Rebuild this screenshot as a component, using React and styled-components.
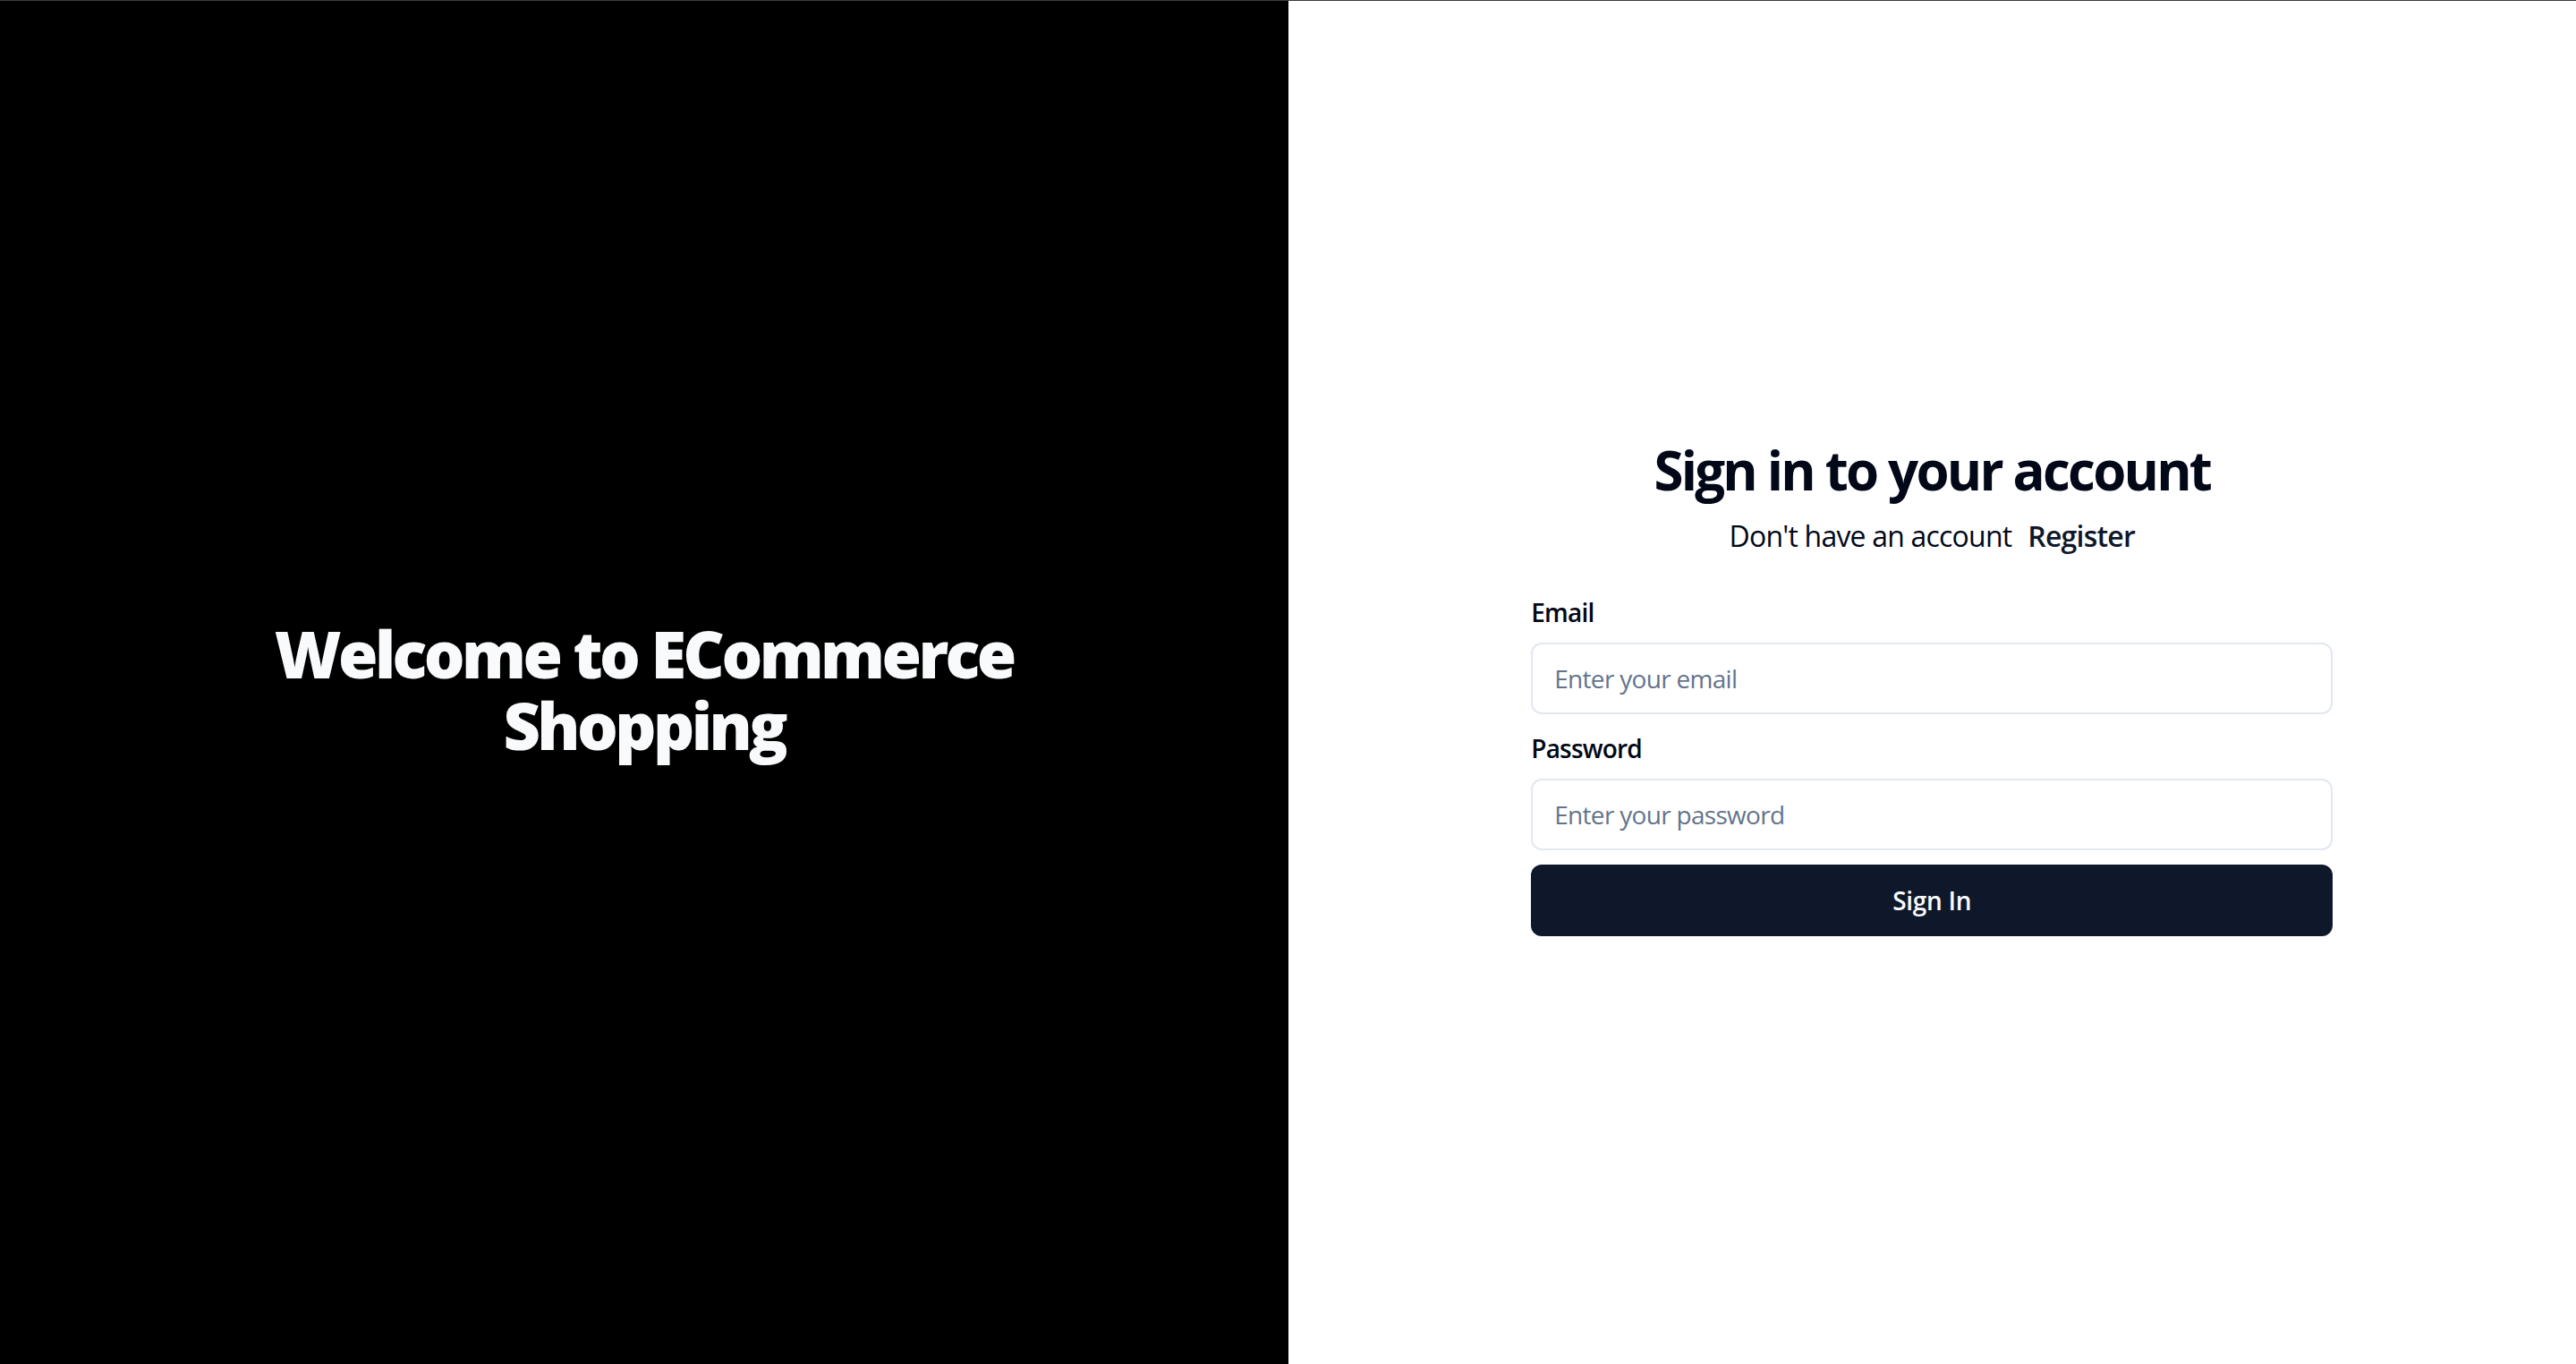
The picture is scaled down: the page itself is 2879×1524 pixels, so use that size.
import React from 'react';
import styled, { createGlobalStyle } from 'styled-components';

const GlobalStyle = createGlobalStyle`
  * { box-sizing: border-box; }
  html, body { margin: 0; padding: 0; }
  body {
    font-family: "Open Sans", "Noto Sans", sans-serif;
    background: #ffffff;
    color: #020817;
  }
`;

const Page = styled.div`
  display: grid;
  grid-template-columns: 1fr 1fr;
  height: 100vh;
  border-top: 1px solid #3b3b3b;
`;

const Hero = styled.section`
  background: #000000;
  display: flex;
  align-items: center;
  justify-content: center;
  padding: 14px 64px 0;
`;

const HeroTitle = styled.h1`
  margin: 0;
  max-width: 900px;
  font-size: 72px;
  line-height: 80px;
  font-weight: 800;
  letter-spacing: -3.6px;
  text-align: center;
  color: #f8fafc;
`;

const Side = styled.section`
  display: flex;
  align-items: center;
  justify-content: center;
  padding-top: 10px;
`;

const Card = styled.div`
  width: 896px;
  display: flex;
  flex-direction: column;
`;

const Title = styled.h2`
  margin: 0;
  font-size: 60px;
  line-height: 72px;
  font-weight: 700;
  letter-spacing: -2.8px;
  text-align: center;
  color: #020817;
`;

const Subtitle = styled.p`
  margin: 14px 0 0;
  font-size: 32px;
  line-height: 48px;
  letter-spacing: -0.8px;
  text-align: center;
  color: #020817;
`;

const RegisterLink = styled.a`
  margin-left: 18px;
  font-weight: 600;
  color: #0f172a;
  text-decoration: none;
  cursor: pointer;
`;

const Form = styled.form`
  margin-top: 41px;
  display: flex;
  flex-direction: column;
`;

const Field = styled.div`
  display: flex;
  flex-direction: column;
  margin-bottom: ${(p) => (p.last ? '16px' : '18px')};
`;

const Label = styled.label`
  font-size: 28px;
  line-height: 40px;
  font-weight: 600;
  letter-spacing: -0.8px;
  color: #020817;
  margin-bottom: 14px;
`;

const Input = styled.input`
  height: 80px;
  width: 100%;
  border: 2px solid #e2e8f0;
  border-radius: 12px;
  padding: 0 24px;
  font-family: inherit;
  font-size: 28px;
  letter-spacing: -0.7px;
  color: #020817;
  background: #ffffff;
  outline: none;
  &::placeholder {
    color: #64748b;
  }
`;

const Button = styled.button`
  height: 80px;
  width: 100%;
  border: none;
  border-radius: 12px;
  background: #0f172a;
  color: #f8fafc;
  font-family: inherit;
  font-size: 28px;
  font-weight: 600;
  letter-spacing: -0.3px;
  cursor: pointer;
`;

export default function App() {
  return (
    <>
      <GlobalStyle />
      <Page>
        <Hero>
          <HeroTitle>Welcome to ECommerce Shopping</HeroTitle>
        </Hero>
        <Side>
          <Card>
            <Title>Sign in to your account</Title>
            <Subtitle>
              Don't have an account
              <RegisterLink>Register</RegisterLink>
            </Subtitle>
            <Form onSubmit={(e) => e.preventDefault()}>
              <Field>
                <Label htmlFor="email">Email</Label>
                <Input id="email" type="email" placeholder="Enter your email" />
              </Field>
              <Field last>
                <Label htmlFor="password">Password</Label>
                <Input id="password" type="password" placeholder="Enter your password" />
              </Field>
              <Button type="submit">Sign In</Button>
            </Form>
          </Card>
        </Side>
      </Page>
    </>
  );
}
